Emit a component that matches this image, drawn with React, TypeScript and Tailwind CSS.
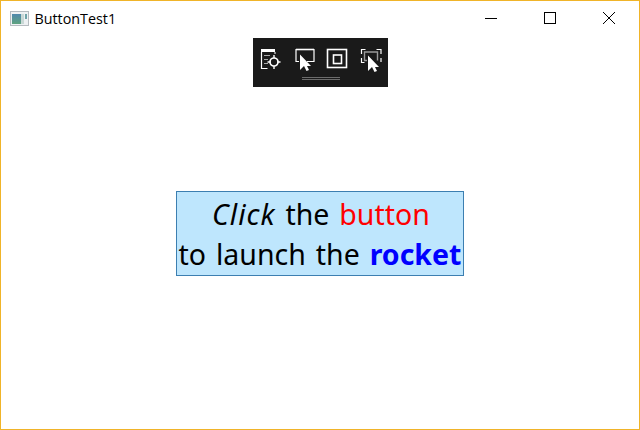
export default function App() {
  return (
    <div className="w-[640px] h-[430px] bg-white border border-[#f0b429] flex flex-col items-center overflow-hidden" style={{ fontFamily: '"Noto Sans", sans-serif' }}>
      <div className="w-full h-[37px] shrink-0 flex items-center">
        <svg width="19" height="15" viewBox="0 0 19 15" className="ml-[9px] mr-[6px] mb-[2px]">
          <defs>
            <linearGradient id="g" x1="0" y1="0" x2="0" y2="1">
              <stop offset="0" stopColor="#4f88ad" />
              <stop offset="1" stopColor="#5fa37f" />
            </linearGradient>
          </defs>
          <rect x="0.5" y="0.5" width="18" height="14" fill="#eef1f3" stroke="#b5bbc0" />
          <rect x="2" y="3" width="9" height="10" fill="url(#g)" />
          <rect x="11" y="3" width="3" height="10" fill="#c9d8d6" />
          <rect x="15" y="3" width="2" height="5" fill="#6fa3a8" />
        </svg>
        <span className="text-[14.3px] leading-none text-black mb-[1px] ml-[-0.5px]" style={{ fontFamily: '"Open Sans", sans-serif' }}>ButtonTest1</span>
        <div className="ml-auto flex items-center h-full mb-[3px]">
          <svg width="46" height="30" viewBox="0 0 46 30"><path d="M17 15.500h12" stroke="#000" /></svg>
          <svg width="46" height="30" viewBox="0 0 46 30" className="ml-[13px]"><rect x="17.500" y="9.500" width="11" height="11" fill="none" stroke="#000" /></svg>
          <svg width="46" height="30" viewBox="0 0 46 30" className="ml-[13px] mr-[7px]"><path d="M17 9l12 12M29 9L17 21" stroke="#000" /></svg>
        </div>
      </div>
      <div className="w-[135px] h-[49px] shrink-0 bg-[#1a1a1a]">
        <svg width="135" height="49" viewBox="0 0 135 49" fill="none" stroke="#fff">
          <rect x="8" y="11" width="14" height="3" fill="#fff" stroke="none" />
          <path d="M8.500 14v16.500h6" strokeWidth="1.2" />
          <path d="M22 14v2" strokeWidth="1" />
          <path d="M11 17.500h6M11 21.500h4M11 25.500h4" strokeWidth="1" stroke="#aaa" />
          <circle cx="21" cy="24" r="4" strokeWidth="1.7" />
          <path d="M21 17v3M21 28v3M14.500 24h3M24.500 24h3" strokeWidth="1.4" />
          <path d="M46 23.500h-3v-12h18v12H54" strokeWidth="1.2" />
          <path d="M43 11.500h18" strokeWidth="1.6" />
          <path d="M47 16.500V32l4-4h7z" fill="#fff" stroke="none" />
          <path d="M50.500 27l3 6 2.500-1-3-6z" fill="#fff" stroke="none" />
          <rect x="74.500" y="11.500" width="19" height="18" strokeWidth="1.6" />
          <rect x="80.500" y="17" width="8" height="8.500" strokeWidth="1.6" />
          <path d="M108.500 16v-4.500h4M123.500 11.500h4.500V16M108.500 20v4.500h3M128 20v4" strokeWidth="1.2" />
          <path d="M114 22.500h-2.500v-8.500h13v8.500" stroke="#9a9a9a" strokeWidth="1.4" />
          <path d="M115 17.500V33l4-4h7z" fill="#fff" stroke="none" />
          <path d="M118.500 28l3 6 2.500-1-3-6z" fill="#fff" stroke="none" />
          <path d="M49 39.500h38M49 41.500h38" stroke="#6b6b6b" />
        </svg>
      </div>
      <div className="flex-1 w-full flex items-center justify-center">
        <button className="w-[288px] h-[85px] mt-[-49px] bg-[#bee6fd] border border-[#3c7fb1] flex flex-col items-center justify-center text-[28.5px] leading-[40px] text-black whitespace-nowrap [word-spacing:2.5px]">
          <span className="ml-[2px]"><i className="tracking-[1px]">Click</i> the <span className="text-[#ff0000]">button</span></span>
          <span>to launch the <b className="text-[#0000ff]">rocket</b></span>
        </button>
      </div>
    </div>
  );
}
